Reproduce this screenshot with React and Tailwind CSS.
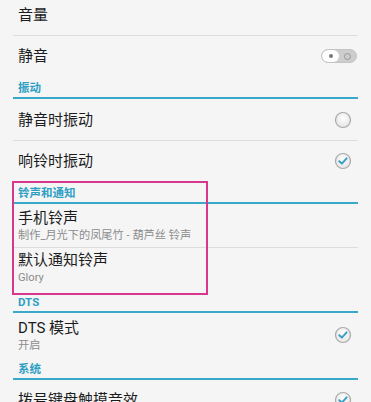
const font = { fontFamily: '"Roboto", "Noto Sans CJK SC", sans-serif' }

const Check = ({ on }) => (
  <svg width="18" height="18" viewBox="0 0 18 18">
    <defs>
      <radialGradient id={on ? "g1" : "g2"} cx="50%" cy="40%" r="60%">
        <stop offset="0%" stopColor="#ffffff" />
        <stop offset="100%" stopColor="#e4e4e4" />
      </radialGradient>
    </defs>
    <circle cx="9" cy="9" r="7.5" fill={`url(#${on ? "g1" : "g2"})`} stroke="#a9a9a9" strokeWidth="1.2" />
    {on && <path d="M5.3 9.2 L7.9 11.6 L12.6 6.4" fill="none" stroke="#3a9fc5" strokeWidth="2" strokeLinecap="round" strokeLinejoin="round" />}
  </svg>
)

const Toggle = () => (
  <div className="flex h-[14px] w-[36px] overflow-hidden rounded-full border border-[#c4c4c4] bg-[#cdcdcd]">
    <div className="flex w-[17px] items-center justify-center rounded-full bg-white">
      <div className="h-[4px] w-[4px] rounded-full bg-[#777]" />
    </div>
    <div className="flex flex-1 items-center justify-center">
      <div className="h-[7px] w-[7px] rounded-full border border-[#999]" />
    </div>
  </div>
)

const Divider = () => <div className="mx-[13px] h-px bg-[#dcdcdc]" />

const Header = ({ title, h }) => (
  <div>
    <div className={`flex items-end pb-[3px] pl-[18px] ${h}`}>
      <span className="text-[11.5px] font-bold leading-[12px] text-[#2e9fc4]">{title}</span>
    </div>
    <div className="mx-[13px] h-[2px] bg-[#3aa8c9]" />
  </div>
)

const Row = ({ title, sub, right, h, pt }) => (
  <div className={`flex items-center justify-between pl-[18px] pr-[19px] ${h}`}>
    <div className={`flex flex-col ${pt}`}>
      <span className="text-[15px] leading-[20px] text-[#1c1c1c]">{title}</span>
      {sub && <span className="text-[11.2px] leading-[15px] text-[#8c8c8c]">{sub}</span>}
    </div>
    {right}
  </div>
)

export default function App() {
  return (
    <div className="relative h-[402px] w-[371px] overflow-hidden bg-[#f5f5f5]" style={font}>
      <div className="flex h-[35px] items-center pb-[5px] pl-[18px]">
        <span className="text-[15px] leading-[20px] text-[#1c1c1c]">音量</span>
      </div>
      <Divider />
      <Row title="静音" h="h-[40px]" right={<div className="mr-[-5px]"><Toggle /></div>} />
      <Header title="振动" h="h-[21px]" />
      <Row title="静音时振动" h="h-[41px]" right={<Check />} />
      <Divider />
      <Row title="响铃时振动" h="h-[39px]" right={<Check on />} />
      <Header title="铃声和通知" h="h-[22px]" />
      <div className="flex h-[43px] flex-col justify-center pl-[18px]">
        <span className="text-[15px] leading-[20px] text-[#1c1c1c]">手机铃声</span>
        <span className="text-[11.2px] leading-[15px] text-[#8c8c8c]">制作_月光下的凤尾竹 - 葫芦丝 铃声</span>
      </div>
      <Divider />
      <div className="flex h-[42px] flex-col justify-start pl-[18px] pt-[2px]">
        <span className="text-[15px] leading-[20px] text-[#1c1c1c]">默认通知铃声</span>
        <span className="text-[11.2px] leading-[15px] text-[#8c8c8c]">Glory</span>
      </div>
      <Header title="DTS" h="h-[21px]" />
      <div className="flex h-[44px] items-center justify-between pl-[18px] pr-[19px]">
        <div className="flex flex-col pt-[1px]">
          <span className="text-[15px] leading-[20px] text-[#1c1c1c]">DTS 模式</span>
          <span className="text-[11.2px] leading-[15px] text-[#8c8c8c]">开启</span>
        </div>
        <Check on />
      </div>
      <Header title="系统" h="h-[21px]" />
      <div className="flex h-[40px] items-center justify-between pl-[18px] pr-[19px]">
        <span className="text-[15px] leading-[20px] text-[#1c1c1c]">拨号键盘触摸音效</span>
        <Check on />
      </div>
      <div className="pointer-events-none absolute left-[12px] top-[181px] h-[114px] w-[196px] border-2 border-[#d9378e]" />
    </div>
  )
}
